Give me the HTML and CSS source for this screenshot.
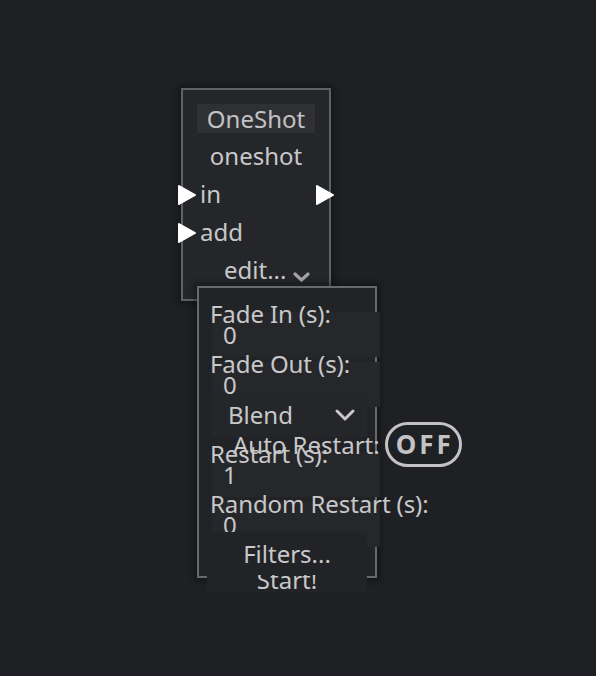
FILE: index.html
```html
<!DOCTYPE html>
<html>
<head>
<meta charset="utf-8">
<link rel="stylesheet" href="styles.css">
</head>
<body>
<div class="canvas">
  <div class="node">
    <div class="title">OneShot</div>
    <div class="rows">
      <div class="row center">oneshot</div>
      <div class="row">
        <svg class="port port-left" width="20" height="22" viewBox="0 0 20 22"><polygon points="2,2 18,11 2,20" fill="#fff" stroke="#fff" stroke-width="2" stroke-linejoin="round"/></svg>
        in
        <svg class="port port-right" width="20" height="22" viewBox="0 0 20 22"><polygon points="2,2 18,11 2,20" fill="#fff" stroke="#fff" stroke-width="2" stroke-linejoin="round"/></svg>
      </div>
      <div class="row">
        <svg class="port port-left" width="20" height="22" viewBox="0 0 20 22"><polygon points="2,2 18,11 2,20" fill="#fff" stroke="#fff" stroke-width="2" stroke-linejoin="round"/></svg>
        add
      </div>
      <div class="row edit">edit...<svg class="chev-small" width="17" height="10" viewBox="0 0 17 10"><polyline points="2,2 8.5,8 15,2" fill="none" stroke="#a3a3a6" stroke-width="3.2" stroke-linecap="round" stroke-linejoin="round"/></svg></div>
    </div>
  </div>

  <div class="popup">
    <div class="label first">Fade In (s):</div>
    <div class="input">0</div>
    <div class="label">Fade Out (s):</div>
    <div class="input">0</div>
    <div class="select">Blend<svg class="chev" width="22" height="14" viewBox="0 0 22 14"><polyline points="3,3 11,11 19,3" fill="none" stroke="#c9c9cb" stroke-width="3" stroke-linecap="round" stroke-linejoin="round"/></svg></div>
    <div class="toggle-row">
      <span class="toggle-label">Auto Restart:</span>
      <span class="pill">OFF</span>
    </div>
    <div class="label after-toggle">Restart (s):</div>
    <div class="input">1</div>
    <div class="label">Random Restart (s):</div>
    <div class="input">0</div>
    <div class="btn btn-filters">Filters...</div>
    <div class="btn btn-start">Start!</div>
  </div>
</div>
</body>
</html>
```

FILE: styles.css
```css
html, body {
  margin: 0;
  padding: 0;
}
body {
  background: #1f2024;
  font-family: "Noto Sans", "Open Sans", sans-serif;
  font-size: 24px;
  color: #c8c8c9;
  width: 596px;
  height: 676px;
  overflow: hidden;
}
.canvas {
  position: relative;
  width: 596px;
  height: 676px;
}

/* graph node */
.node {
  position: absolute;
  left: 181px;
  top: 88px;
  width: 150px;
  height: 213px;
  box-sizing: border-box;
  border: 2px solid #606165;
  background: #25262a;
  box-shadow: 0 0 6px 3px rgba(0, 0, 0, 0.35);
  padding-top: 14px;
}
.title {
  width: 118px;
  height: 29px;
  margin: 0 auto;
  background: #2f3034;
  line-height: 29px;
  text-align: center;
  color: #c2c2c4;
}
.rows {
  margin-top: 4px;
}
.row {
  position: relative;
  height: 38px;
  line-height: 38px;
  padding-left: 17px;
  white-space: nowrap;
}
.row.center {
  padding-left: 0;
  text-align: center;
}
.row.edit {
  padding-left: 41px;
}
.chev-small {
  margin-left: 7px;
  vertical-align: -3px;
}
.port {
  position: absolute;
  top: 9px;
}
.port-left {
  left: -6px;
}
.port-right {
  left: 132px;
}

/* popup */
.popup {
  position: absolute;
  left: 197px;
  top: 286px;
  width: 180px;
  height: 292px;
  box-sizing: border-box;
  border: 2px solid #68696d;
  background: #222327;
  box-shadow: 0 0 6px 3px rgba(0, 0, 0, 0.35);
  padding-left: 11px;
  white-space: nowrap;
}
.label {
  height: 20px;
  line-height: 20px;
  margin-top: -3px;
  letter-spacing: -0.1px;
}
.label.first {
  margin-top: 16px;
}
.label.after-toggle {
  margin-top: -23px;
}
.input {
  height: 45px;
  line-height: 45px;
  width: 157px;
  margin: -12px 0 0 2px;
  padding-left: 11px;
  background: #26272b;
}
.select {
  display: flex;
  align-items: center;
  height: 45px;
  width: 139px;
  margin: -15px 0 0 2px;
  padding-left: 16px;
  background: #25262a;
}
.select .chev {
  margin-left: auto;
  margin-right: 11px;
}
.toggle-row {
  display: flex;
  align-items: center;
  height: 45px;
  margin-top: -15px;
  padding-left: 23px;
}
.toggle-label {
  flex-shrink: 0;
}
.pill {
  flex-shrink: 0;
  box-sizing: border-box;
  width: 77px;
  height: 45px;
  margin-left: 5px;
  border: 3px solid #c3c3c5;
  border-radius: 23px;
  text-align: center;
  line-height: 39px;
  font-weight: bold;
  font-size: 26px;
  letter-spacing: 3px;
  padding-left: 3px;
  color: #c3c3c5;
}
.btn {
  width: 160px;
  margin-left: -3px;
  background: #222327;
  text-align: center;
}
.btn-filters {
  position: relative;
  z-index: 1;
  box-sizing: border-box;
  height: 43px;
  margin-top: -15px;
  padding-top: 12px;
  line-height: 20px;
  overflow: hidden;
}
.btn-start {
  height: 17px;
  line-height: 10px;
}
```
